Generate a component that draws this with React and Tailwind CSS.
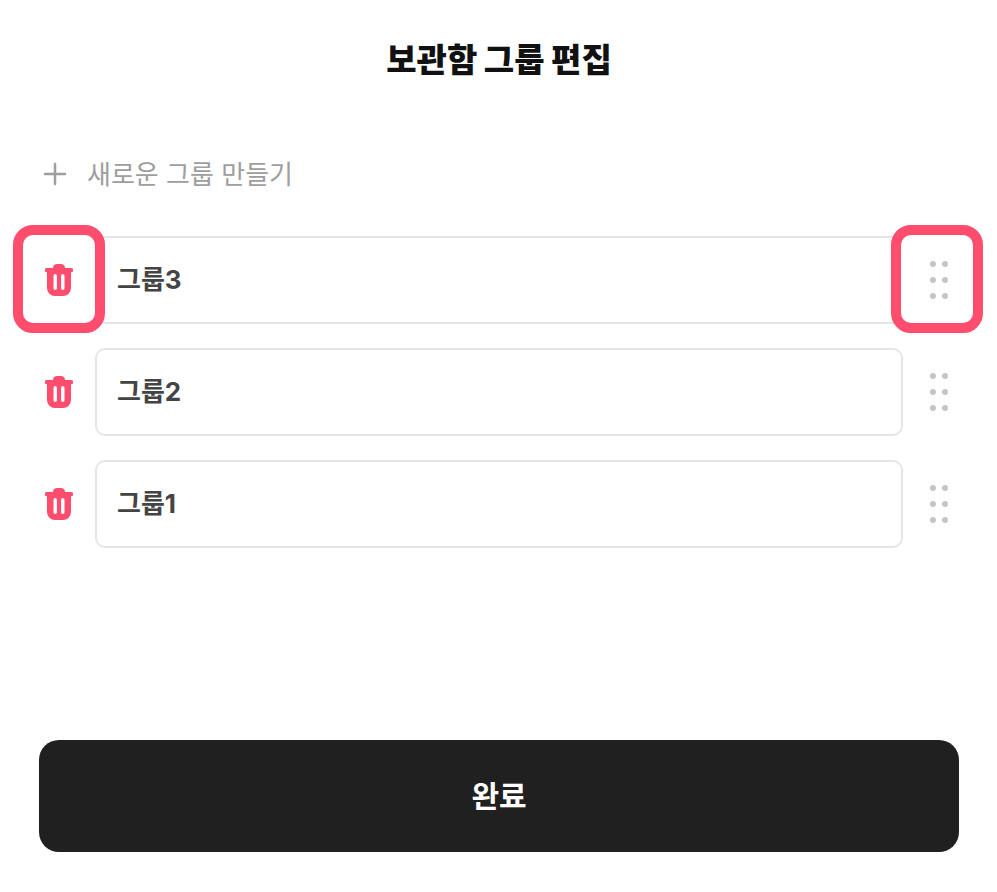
import { useState } from "react";

function TrashIcon() {
  return (
    <svg width="28" height="32" viewBox="0 0 28 32" className="relative" aria-hidden="true">
      <path
        fill="#ff4d6d"
        d="M8 4C8 1.500 9.800 0 12 0h4c2.200 0 4 1.500 4 4h6a2 2 0 0 1 0 4.300V24a8 8 0 0 1-8 8h-8a8 8 0 0 1-8-8V8.300A2 2 0 0 1 2 4z"
      />
      <path stroke="#fff" strokeWidth="3.400" strokeLinecap="round" d="M10.200 11.800v12.400M17.800 11.800v12.400" />
    </svg>
  );
}

function GripIcon() {
  return (
    <svg width="18" height="38" viewBox="0 0 18 38" fill="#c4c4c4" className="relative" aria-hidden="true">
      {[3, 19, 35].map((y) => (
        <g key={y}>
          <circle cx="3" cy={y} r="3" />
          <circle cx="15" cy={y} r="3" />
        </g>
      ))}
    </svg>
  );
}

function Highlight({ className }) {
  return (
    <span
      className={`absolute -top-[11px] -bottom-[9px] rounded-[20px] border-10 border-[#ff4d6d] bg-white ${className}`}
    />
  );
}

function GroupRow({ name, highlighted, onRename, onRemove }) {
  return (
    <li className="flex h-22 items-stretch gap-4">
      <button
        type="button"
        aria-label={`${name} 삭제`}
        onClick={onRemove}
        className="relative order-1 flex w-10 shrink-0 items-center justify-center"
      >
        {highlighted && <Highlight className="-right-[26px] -left-[26px]" />}
        <TrashIcon />
      </button>
      <button
        type="button"
        aria-label={`${name} 순서 변경`}
        className="relative order-3 flex w-10 shrink-0 cursor-grab items-center justify-center"
      >
        {highlighted && <Highlight className="-right-[24px] -left-[28px]" />}
        <GripIcon />
      </button>
      <input
        type="text"
        aria-label="그룹 이름"
        value={name}
        onChange={(e) => onRename(e.target.value)}
        className="order-2 min-w-0 flex-1 rounded-[10px] border-2 border-[#e6e6e6] bg-white px-5 pb-0.5 text-[26px] font-bold text-[#444] outline-none"
      />
    </li>
  );
}

export default function App() {
  const [groups, setGroups] = useState([
    { id: 3, name: "그룹3" },
    { id: 2, name: "그룹2" },
    { id: 1, name: "그룹1" },
  ]);

  return (
    <main className="flex min-h-screen flex-col bg-white pt-9 pr-[38px] pb-10 pl-[39px] font-[Inter,'Noto_Sans_CJK_KR',sans-serif]">
      <h1 className="text-center text-[33px] leading-12 font-black text-[#111]">보관함 그룹 편집</h1>

      <button
        type="button"
        onClick={() => setGroups([{ id: Date.now(), name: "새 그룹" }, ...groups])}
        className="mt-16 flex h-13 items-center gap-4 self-start text-[26px] text-[#9e9e9e]"
      >
        <svg width="32" height="32" viewBox="0 0 32 32" stroke="#9e9e9e" strokeWidth="2.500" aria-hidden="true">
          <path d="M6 16h20M16 6v20" strokeLinecap="round" />
        </svg>
        새로운 그룹 만들기
      </button>

      <ul className="mt-9 flex flex-col gap-6">
        {groups.map((group, index) => (
          <GroupRow
            key={group.id}
            name={group.name}
            highlighted={index === 0}
            onRename={(name) => setGroups(groups.map((g) => (g.id === group.id ? { ...g, name } : g)))}
            onRemove={() => setGroups(groups.filter((g) => g.id !== group.id))}
          />
        ))}
      </ul>

      <button type="button" className="mt-auto h-28 rounded-[20px] bg-[#202020] text-[30px] font-bold text-white">
        완료
      </button>
    </main>
  );
}
